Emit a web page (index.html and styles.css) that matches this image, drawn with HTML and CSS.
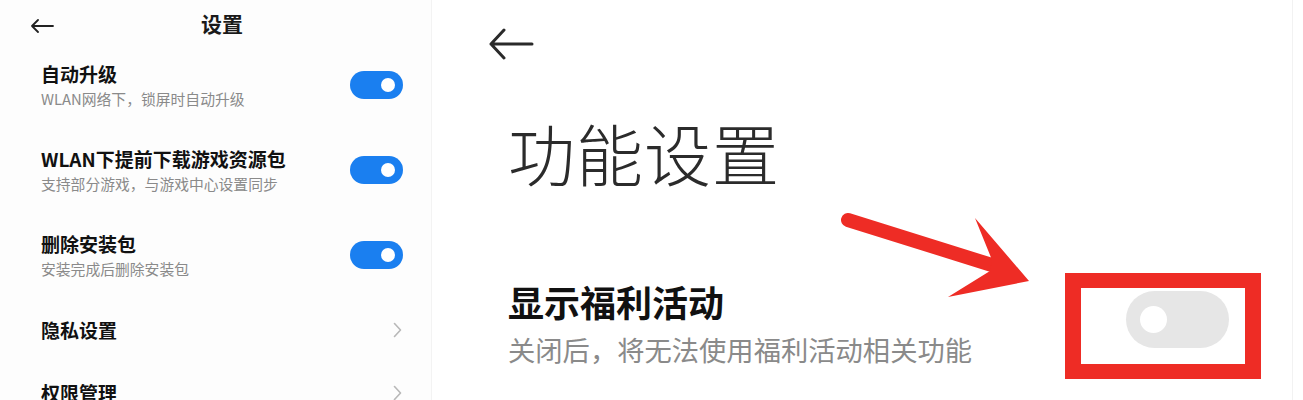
FILE: index.html
```html
<!DOCTYPE html>
<html lang="zh-CN">
<head>
<meta charset="utf-8">
<title>设置</title>
<link rel="stylesheet" href="styles.css">
</head>
<body>
<div class="page">
  <section class="left">
    <header class="lhead">
      <svg class="lback" width="24" height="14" viewBox="0 0 24 14"><path d="M23 7H2M8 1L2 7l6 6" fill="none" stroke="#222" stroke-width="1.8" stroke-linecap="round" stroke-linejoin="round"/></svg>
      <h1 class="ltitle">设置</h1>
    </header>
    <div class="row">
      <div class="txt">
        <div class="rt">自动升级</div>
        <div class="rs">WLAN网络下，锁屏时自动升级</div>
      </div>
      <span class="sw on"><span class="knob"></span></span>
    </div>
    <div class="row">
      <div class="txt">
        <div class="rt">WLAN下提前下载游戏资源包</div>
        <div class="rs">支持部分游戏，与游戏中心设置同步</div>
      </div>
      <span class="sw on"><span class="knob"></span></span>
    </div>
    <div class="row">
      <div class="txt">
        <div class="rt">删除安装包</div>
        <div class="rs">安装完成后删除安装包</div>
      </div>
      <span class="sw on"><span class="knob"></span></span>
    </div>
    <div class="row single">
      <div class="rt">隐私设置</div>
      <svg class="chev" width="9" height="16" viewBox="0 0 9 16"><path d="M1.5 1.5L7.5 8l-6 6.5" fill="none" stroke="#b8b8b8" stroke-width="1.6" stroke-linecap="round" stroke-linejoin="round"/></svg>
    </div>
    <div class="row single">
      <div class="rt">权限管理</div>
      <svg class="chev" width="9" height="16" viewBox="0 0 9 16"><path d="M1.5 1.5L7.5 8l-6 6.5" fill="none" stroke="#b8b8b8" stroke-width="1.6" stroke-linecap="round" stroke-linejoin="round"/></svg>
    </div>
  </section>
  <section class="right">
    <svg class="rback" width="46" height="32" viewBox="0 0 46 32"><path d="M44 16H3M16 2L3 16l13 14" fill="none" stroke="#2a2a2a" stroke-width="3" stroke-linecap="round" stroke-linejoin="round"/></svg>
    <h2 class="big">功能设置</h2>
    <div class="frow">
      <div class="ftxt">
        <div class="ft">显示福利活动</div>
        <div class="fs">关闭后，将无法使用福利活动相关功能</div>
      </div>
      <span class="bigsw"><span class="bigknob"></span></span>
    </div>
    <svg class="anno" width="871" height="400" viewBox="432 0 871 400">
      <line x1="848" y1="220" x2="995" y2="266" stroke="#ee2c25" stroke-width="14" stroke-linecap="round"/>
      <polygon points="975,218 1029,281 948,297 990,271 992,260" fill="#ee2c25"/>
    </svg>
    <div class="redbox"></div>
  </section>
</div>
</body>
</html>
```
FILE: styles.css
```css
* { box-sizing: border-box; margin: 0; padding: 0; }
html, body { background: #fff; }
body {
  width: 1303px;
  height: 400px;
  overflow: hidden;
  font-family: "Noto Sans CJK SC", "Noto Sans", sans-serif;
}
.page { display: flex; height: 400px; overflow: hidden; }

.left {
  width: 432px;
  flex: none;
  background: #fdfdfd;
  border-right: 1px solid #f3f3f3;
  overflow: hidden;
}
.lhead {
  height: 43px;
  display: grid;
  grid-template-columns: 1fr;
  align-items: center;
  position: relative;
}
.lback { position: absolute; left: 30px; top: 19px; }
.ltitle {
  font-size: 21px;
  font-weight: 700;
  color: #1a1a1a;
  text-align: center;
  padding-left: 13px;
  line-height: 1;
  margin-top: 4px;
}
.row {
  height: 85px;
  display: flex;
  align-items: center;
  justify-content: space-between;
  padding: 0 28px 0 41px;
}
.row.single { height: 63px; padding-right: 29px; }
.txt { display: flex; flex-direction: column; }
.rt {
  font-size: 19px;
  font-weight: 700;
  color: #111;
  line-height: 26px;
}
.rs {
  font-size: 14.8px;
  color: #8a8a8a;
  line-height: 22px;
  margin-top: 1px;
}
.sw {
  width: 53px;
  height: 28px;
  border-radius: 14px;
  background: #1a7ff0;
  display: flex;
  align-items: center;
  justify-content: flex-end;
  padding-right: 8px;
  flex: none;
  margin-top: -1px;
}
.knob { width: 14px; height: 14px; border-radius: 50%; background: #fff; }

.right {
  flex: none;
  width: 861px;
  position: relative;
  padding-left: 76px;
  border-right: 1px solid #f2f2f2;
}
.rback { display: block; margin: 28px 0 0 -20px; }
.big {
  font-size: 67px;
  font-weight: 300;
  color: #2b2b2b;
  line-height: 66px;
  margin-top: 59px;
  letter-spacing: 1px;
}
.frow {
  display: flex;
  align-items: center;
  justify-content: space-between;
  margin-top: 94px;
  padding-right: 63px;
}
.ft {
  font-size: 36px;
  font-weight: 700;
  color: #111;
  line-height: 44px;
}
.fs {
  font-size: 27.3px;
  color: #8a8a8a;
  line-height: 36px;
  margin-top: 8px;
}
.bigsw {
  width: 103px;
  height: 57px;
  border-radius: 29px;
  background: #e6e6e6;
  display: flex;
  align-items: center;
  padding-left: 14px;
  margin-top: -8px;
}
.bigknob { width: 27px; height: 27px; border-radius: 50%; background: #fff; }

.anno { position: absolute; left: 0; top: 0; pointer-events: none; }
.redbox {
  position: absolute;
  left: 633px;
  top: 273px;
  width: 196px;
  height: 106px;
  border: 15px solid #ee2c25;
  border-left-width: 16px;
  border-right-width: 16px;
}
```
